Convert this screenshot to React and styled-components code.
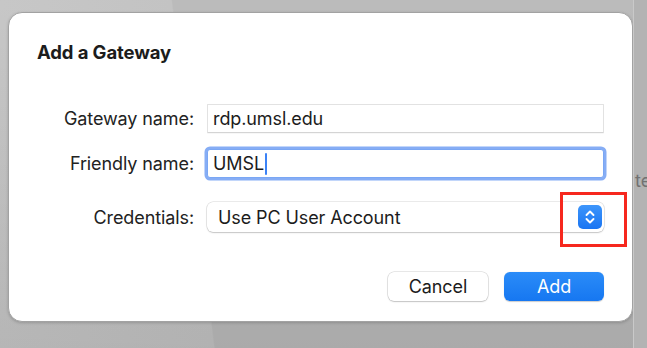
import React from 'react';
import styled, { createGlobalStyle } from 'styled-components';

const GlobalStyle = createGlobalStyle`
  html, body {
    margin: 0;
    padding: 0;
    width: 647px;
    height: 348px;
    overflow: hidden;
  }
  body {
    font-family: Inter, "Helvetica Neue", "Liberation Sans", sans-serif;
    -webkit-font-smoothing: antialiased;
  }
`;

// Backdrop: the dimmed window behind the sheet
const Backdrop = styled.div`
  width: 647px;
  height: 348px;
  display: flex;
  align-items: flex-start;
  padding: 12px 0 0 8px;
  box-sizing: border-box;
  background:
    linear-gradient(180deg, rgba(0, 0, 0, 0) 0%, rgba(0, 0, 0, 0.09) 100%),
    linear-gradient(83deg, #c8c8c8 0%, #c3c3c3 31%, #bbbbbb 31.2%, #bbbbbb 100%);
`;

const Sheet = styled.div`
  width: 625px;
  height: 310px;
  flex-shrink: 0;
  box-sizing: border-box;
  background: #ffffff;
  border: 1px solid #a2a2a2;
  border-radius: 14px;
  box-shadow: 0 1px 3px rgba(0, 0, 0, 0.18);
  padding: 27px 28px 20px 28px;
  display: flex;
  flex-direction: column;
`;

const SideStrip = styled.div`
  flex: 1;
  align-self: stretch;
  margin-top: -12px;
  border-left: 1px solid #c9c9c9;
  background: #b3b3b3;
  overflow: hidden;
  padding-top: 170px;
`;

const SideText = styled.span`
  font-size: 18px;
  color: #727272;
  white-space: nowrap;
  margin-left: 1px;
`;

const Title = styled.h1`
  margin: 0;
  font-size: 18.5px;
  font-weight: 700;
  color: #1c1c1c;
  line-height: 24px;
  letter-spacing: -0.1px;
`;

const Form = styled.div`
  display: grid;
  grid-template-columns: 157px 397px;
  column-gap: 13px;
  margin-top: 32px;
`;

const Label = styled.label`
  font-size: 18px;
  color: #222222;
  text-align: right;
  align-self: center;
  white-space: nowrap;
  letter-spacing: -0.1px;
`;

const FieldCell = styled.div`
  height: ${p => p.$h}px;
  display: flex;
  align-items: center;
`;

const TextField = styled.div`
  width: 100%;
  height: 29px;
  box-sizing: border-box;
  display: flex;
  align-items: center;
  padding-left: 5px;
  font-size: 18px;
  color: #1c1c1c;
  background: #fff;
  border: 1px solid ${p => (p.$focused ? '#7aa7f4' : '#e2e2e2')};
  border-bottom-color: ${p => (p.$focused ? '#7aa7f4' : '#d4d4d4')};
  box-shadow: ${p => (p.$focused ? '0 0 0 2.5px #86adf5' : '0 1px 0 rgba(0,0,0,0.03)')};
  border-radius: ${p => (p.$focused ? '3px' : '1px')};
  letter-spacing: -0.1px;
`;

const Caret = styled.span`
  display: inline-block;
  width: 2px;
  height: 22px;
  margin-left: 1px;
  background: #3b82f6;
  border-radius: 1px;
`;

const Popup = styled.div`
  width: 100%;
  height: 30px;
  box-sizing: border-box;
  display: flex;
  align-items: center;
  justify-content: space-between;
  padding: 0 2px 0 11px;
  font-size: 18px;
  color: #1c1c1c;
  background: #fff;
  border-radius: 6px;
  box-shadow: 0 0 0 0.5px rgba(0, 0, 0, 0.16), 0 1px 1.5px rgba(0, 0, 0, 0.16);
  position: relative;
  letter-spacing: -0.1px;
`;

const Stepper = styled.span`
  width: 24px;
  height: 24px;
  border-radius: 5px;
  background: linear-gradient(180deg, #3d95fb 0%, #1a75f2 100%);
  display: flex;
  align-items: center;
  justify-content: center;
`;

const Highlight = styled.span`
  position: absolute;
  right: -23px;
  top: -10px;
  width: 61px;
  height: 49px;
  border: 3px solid #f6281e;
  pointer-events: none;
`;

const Actions = styled.div`
  display: flex;
  justify-content: flex-end;
  gap: 16px;
  margin-top: auto;
`;

const Button = styled.button`
  width: 100px;
  height: 29px;
  border: none;
  border-radius: 6px;
  font-family: inherit;
  font-size: 18px;
  letter-spacing: -0.1px;
  color: ${p => (p.$primary ? '#ffffff' : '#1c1c1c')};
  background: ${p =>
    p.$primary ? 'linear-gradient(180deg, #2b8cf8 0%, #1677f1 100%)' : '#ffffff'};
  box-shadow: ${p =>
    p.$primary
      ? '0 0.5px 1px rgba(0,0,0,0.2)'
      : '0 0 0 0.5px rgba(0,0,0,0.18), 0 1px 1.5px rgba(0,0,0,0.16)'};
  padding: 0;
`;

const Chevrons = () => (
  <svg width="12" height="18" viewBox="0 0 12 18" fill="none">
    <path d="M2.5 7 L6 3.5 L9.5 7" stroke="#fff" strokeWidth="1.9" strokeLinecap="round" strokeLinejoin="round" />
    <path d="M2.5 11 L6 14.5 L9.5 11" stroke="#fff" strokeWidth="1.9" strokeLinecap="round" strokeLinejoin="round" />
  </svg>
);

const App = () => (
  <>
    <GlobalStyle />
    <Backdrop>
      <Sheet>
        <Title>Add a Gateway</Title>
        <Form>
          <Label>Gateway name:</Label>
          <FieldCell $h={45}>
            <TextField>rdp.umsl.edu</TextField>
          </FieldCell>
          <Label>Friendly name:</Label>
          <FieldCell $h={45}>
            <TextField $focused>
              UMSL<Caret />
            </TextField>
          </FieldCell>
          <Label>Credentials:</Label>
          <FieldCell $h={62}>
            <Popup>
              Use PC User Account
              <Stepper>
                <Chevrons />
              </Stepper>
              <Highlight />
            </Popup>
          </FieldCell>
        </Form>
        <Actions>
          <Button>Cancel</Button>
          <Button $primary>Add</Button>
        </Actions>
      </Sheet>
      <SideStrip>
        <SideText>te</SideText>
      </SideStrip>
    </Backdrop>
  </>
);

export default App;
